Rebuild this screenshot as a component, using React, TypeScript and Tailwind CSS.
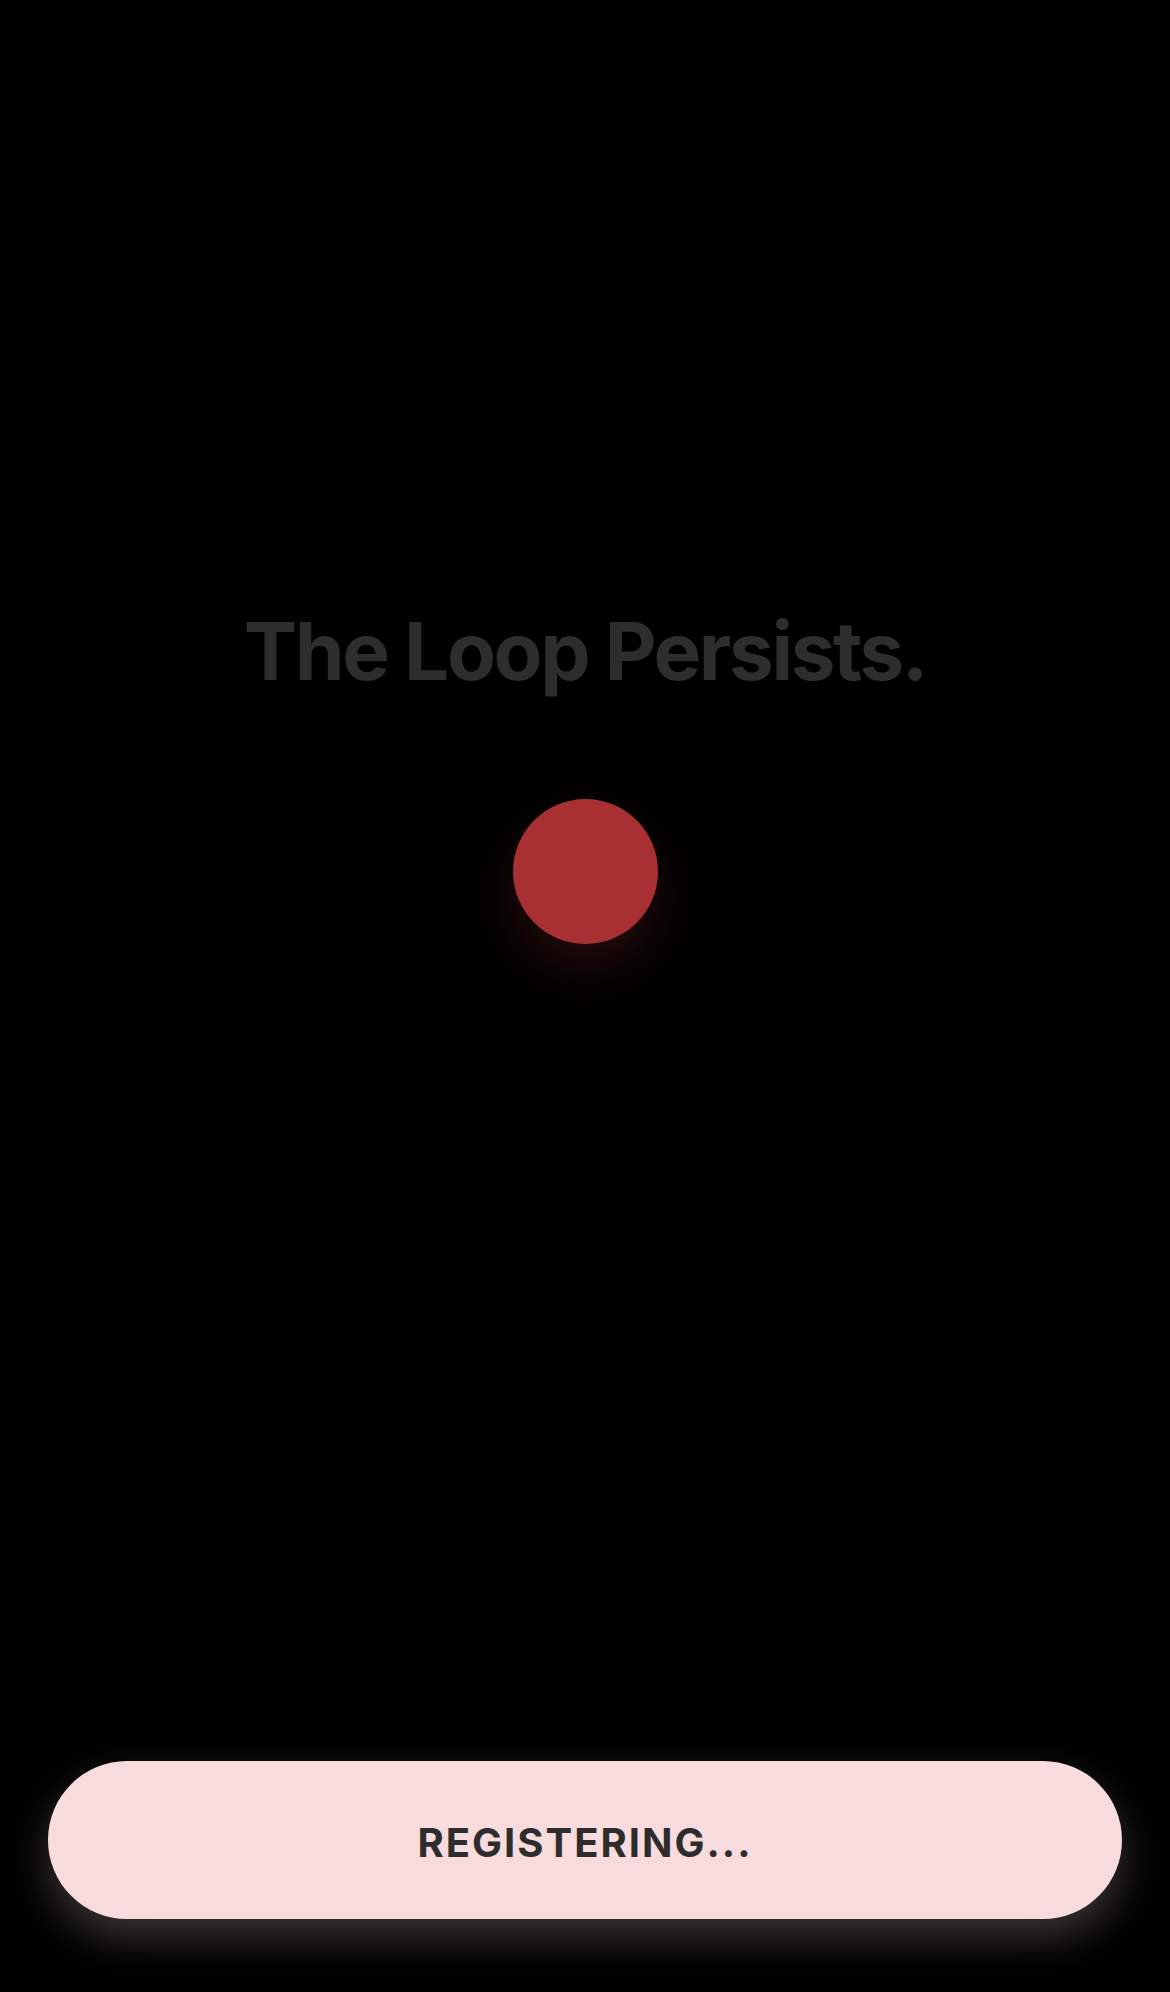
import React from 'react';

const App = () => {
  return (
    <div
      className="flex min-h-[1992px] flex-col items-center bg-black"
      style={{ fontFamily: 'Inter, "Noto Sans", sans-serif' }}
    >
      {/* 제목 */}
      <h1 className="mt-[611px] text-[80px] font-bold leading-[80px] tracking-[-0.03em] text-[#2d2d2d]">
        The Loop Persists.
      </h1>

      {/* 녹음 표시 */}
      <div className="mt-[108px] h-[145px] w-[145px] rounded-full bg-[#a83033] shadow-[0_24px_50px_rgba(168,48,51,0.22)]" />

      <div className="flex-1" />

      <div className="w-full px-12 pb-[73px]">
        <button className="flex h-[158px] w-full items-center justify-center rounded-full bg-[#f8dbdc] pt-[5px] shadow-[0_18px_40px_rgba(248,219,220,0.24)]">
          <span className="text-[40px] font-bold leading-[40px] tracking-wider text-[#2d2d2d]">
            REGISTERING...
          </span>
        </button>
      </div>
    </div>
  );
};

export default App;
